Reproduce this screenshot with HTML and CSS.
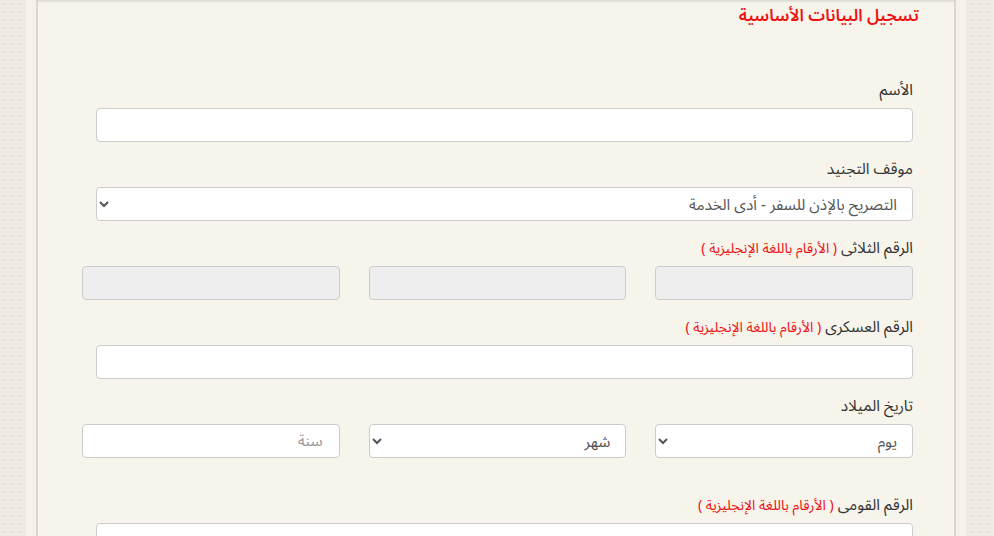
FILE: index.html
```html
<!DOCTYPE html>
<html lang="ar" dir="rtl">
<head>
<meta charset="utf-8">
<title>تسجيل البيانات الأساسية</title>
<link rel="stylesheet" href="styles.css">
</head>
<body>
<div class="frame">
  <div class="sheet">
    <h2 class="title">تسجيل البيانات الأساسية</h2>
    <form class="form">
      <div class="group">
        <label class="label">الأسم</label>
        <input class="control" type="text">
      </div>
      <div class="group">
        <label class="label">موقف التجنيد</label>
        <select class="control select">
          <option>التصريح بالإذن للسفر - أدى الخدمة</option>
        </select>
      </div>
      <div class="group">
        <label class="label">الرقم الثلاثى <span class="note">( الأرقام باللغة الإنجليزية )</span></label>
        <div class="row3">
          <input class="control" type="text" disabled>
          <input class="control" type="text" disabled>
          <input class="control" type="text" disabled>
        </div>
      </div>
      <div class="group">
        <label class="label">الرقم العسكرى <span class="note">( الأرقام باللغة الإنجليزية )</span></label>
        <input class="control" type="text">
      </div>
      <div class="group group-wide">
        <label class="label">تاريخ الميلاد</label>
        <div class="row3">
          <select class="control select"><option>يوم</option></select>
          <select class="control select"><option>شهر</option></select>
          <input class="control" type="text" placeholder="سنة">
        </div>
      </div>
      <div class="group">
        <label class="label">الرقم القومى <span class="note">( الأرقام باللغة الإنجليزية )</span></label>
        <input class="control" type="text">
      </div>
    </form>
  </div>
</div>
</body>
</html>
```
FILE: styles.css
```css
html, body {
  margin: 0;
  padding: 0;
  height: 100%;
}
body {
  background-color: #efebe1;
  background-image: radial-gradient(circle, #e4dfd2 0.8px, transparent 1.2px);
  background-size: 8px 8px;
  font-family: "Noto Sans Arabic", "Noto Kufi Arabic", "Noto Sans", sans-serif;
  color: #333;
  overflow: hidden;
}
.frame {
  margin: 0 28px 0 26px;
  padding: 0 10px;
  min-height: 100%;
  background: #f5f2ea;
  box-sizing: border-box;
}
.sheet {
  min-height: 536px;
  background: #f7f4ec;
  border-left: 2px solid #ddd7c7;
  border-right: 2px solid #ddd7c7;
  padding: 0 35px 0 58px;
  background-image: linear-gradient(#d9d7d2, #f7f4ec 3px);
  background-repeat: no-repeat;
}
.title {
  margin: 0;
  padding: 3px 0 2px;
  font-size: 16.8px;
  line-height: 26px;
  font-weight: 600;
  color: #ee1111;
}
.form {
  padding-top: 47px;
  padding-right: 6px;
}
.group {
  margin-bottom: 15px;
}
.group-wide {
  margin-bottom: 35px;
}
.label {
  display: block;
  height: 25px;
  font-size: 15.5px;
  line-height: 25px;
  margin-bottom: 5px;
  color: #333;
  white-space: nowrap;
}
.note {
  font-size: 14px;
  line-height: 1;
  color: #ee1111;
}
.control {
  display: block;
  box-sizing: border-box;
  width: 100%;
  height: 34px;
  padding: 0 16px 0 12px;
  font-family: "Noto Sans Arabic", "Noto Kufi Arabic", "Noto Sans", sans-serif;
  font-size: 15.4px;
  line-height: normal;
  color: #555;
  background: #fff;
  border: 1px solid #cccccc;
  border-radius: 4px;
  margin: 0;
}
.select {
  padding-right: 11px;
}
.control::placeholder {
  color: #999;
}
.control:disabled {
  background: #eeeeee;
}
.row3 {
  display: grid;
  grid-template-columns: 1fr 1fr 1fr;
  column-gap: 29px;
  margin-left: -14px;
}
```
